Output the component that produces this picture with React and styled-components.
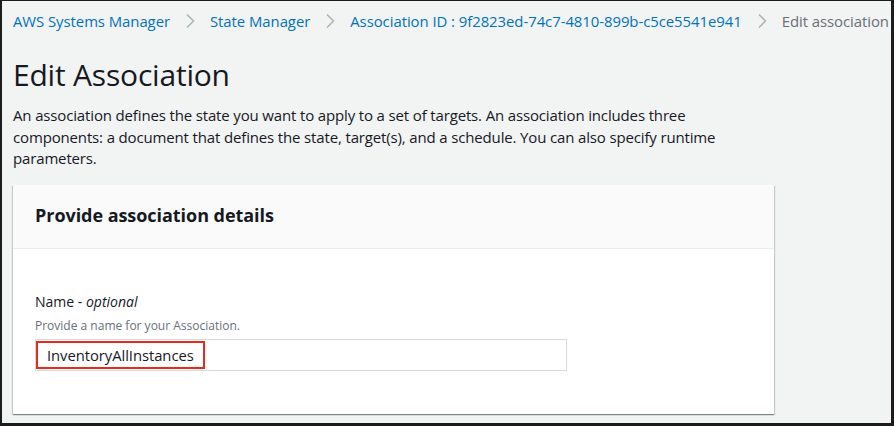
import React from "react";
import styled, { createGlobalStyle } from "styled-components";

const Global = createGlobalStyle`
  html, body { margin: 0; padding: 0; }
  body {
    width: 894px; height: 426px; overflow: hidden;
    font-family: "Open Sans", "Noto Sans", Arial, sans-serif;
    background: #1a1a1a;
  }
`;

const Frame = styled.div`
  box-sizing: border-box;
  width: 894px; height: 426px;
  border-style: solid;
  border-color: #1c1c1c;
  border-width: 1px 3px 3px 2px;
  background: #f2f3f3;
  overflow: hidden;
`;

const Page = styled.div`
  padding: 0 0 0 11px;
  display: flex;
  flex-direction: column;
`;

const Crumbs = styled.nav`
  display: flex;
  align-items: center;
  height: 40px;
  white-space: nowrap;
  font-size: 14.9px;
  letter-spacing: -0.05px;
`;

const Crumb = styled.span`
  color: ${p => (p.$current ? "#687078" : "#0073bb")};
`;

const Sep = styled.span`
  display: inline-flex;
  margin: 0 15px 0 15px;
`;

const Title = styled.h1`
  margin: 13px 0 0 0;
  font-size: 30px;
  font-weight: 400;
  line-height: 42px;
  color: #16191f;
  letter-spacing: -0.2px;
`;

const Desc = styled.p`
  margin: 9px 0 0 0;
  max-width: 720px;
  font-size: 15px;
  line-height: 21.5px;
  color: #16191f;
  letter-spacing: -0.15px;
`;

const Card = styled.section`
  margin-top: 15px;
  width: 761px;
  background: #fff;
  box-shadow: 0 1px 1px 0 rgba(0, 28, 36, 0.3), 1px 1px 1px 0 rgba(0, 28, 36, 0.15), -1px 1px 1px 0 rgba(0, 28, 36, 0.15);
`;

const CardHeader = styled.header`
  background: #fafafa;
  border-bottom: 1px solid #eaeded;
  height: 63px;
  display: flex;
  align-items: center;
  padding: 0 22px;
`;

const CardTitle = styled.h2`
  margin: 0 0 2px 0;
  font-size: 18px;
  font-weight: 700;
  color: #16191f;
  letter-spacing: -0.05px;
`;

const CardBody = styled.div`
  padding: 43px 22px 43px;
  display: flex;
  flex-direction: column;
`;

const Label = styled.label`
  font-size: 14px;
  line-height: 20px;
  color: #16191f;
  em { font-style: italic; }
`;

const Hint = styled.div`
  margin-top: 5px;
  font-size: 12px;
  line-height: 17px;
  color: #687078;
`;

const InputBox = styled.div`
  margin-top: 5px;
  width: 532px;
  height: 32px;
  box-sizing: border-box;
  border: 1px solid #d5dbdb;
  padding: 1px 0 0 0;
  display: flex;
`;

const Value = styled.span`
  box-sizing: border-box;
  height: 28px;
  border: 2px solid #e8291c;
  padding: 0 9px;
  display: flex;
  align-items: center;
  font-size: 14.8px;
  color: #16191f;
  letter-spacing: -0.05px;
`;

const Chevron = () => (
  <svg width="10" height="16" viewBox="0 0 10 16">
    <path d="M2 1.5 L8.5 8 L2 14.5" fill="none" stroke="#aab7b8" strokeWidth="1.6" />
  </svg>
);

export default function App() {
  return (
    <>
      <Global />
      <Frame>
        <Page>
          <Crumbs>
            <Crumb>AWS Systems Manager</Crumb>
            <Sep><Chevron /></Sep>
            <Crumb>State Manager</Crumb>
            <Sep><Chevron /></Sep>
            <Crumb>Association ID : 9f2823ed-74c7-4810-899b-c5ce5541e941</Crumb>
            <Sep><Chevron /></Sep>
            <Crumb $current>Edit association</Crumb>
          </Crumbs>
          <Title>Edit Association</Title>
          <Desc>
            An association defines the state you want to apply to a set of targets. An association includes three
            components: a document that defines the state, target(s), and a schedule. You can also specify runtime
            parameters.
          </Desc>
          <Card>
            <CardHeader>
              <CardTitle>Provide association details</CardTitle>
            </CardHeader>
            <CardBody>
              <Label>Name - <em>optional</em></Label>
              <Hint>Provide a name for your Association.</Hint>
              <InputBox>
                <Value>InventoryAllInstances</Value>
              </InputBox>
            </CardBody>
          </Card>
        </Page>
      </Frame>
    </>
  );
}
